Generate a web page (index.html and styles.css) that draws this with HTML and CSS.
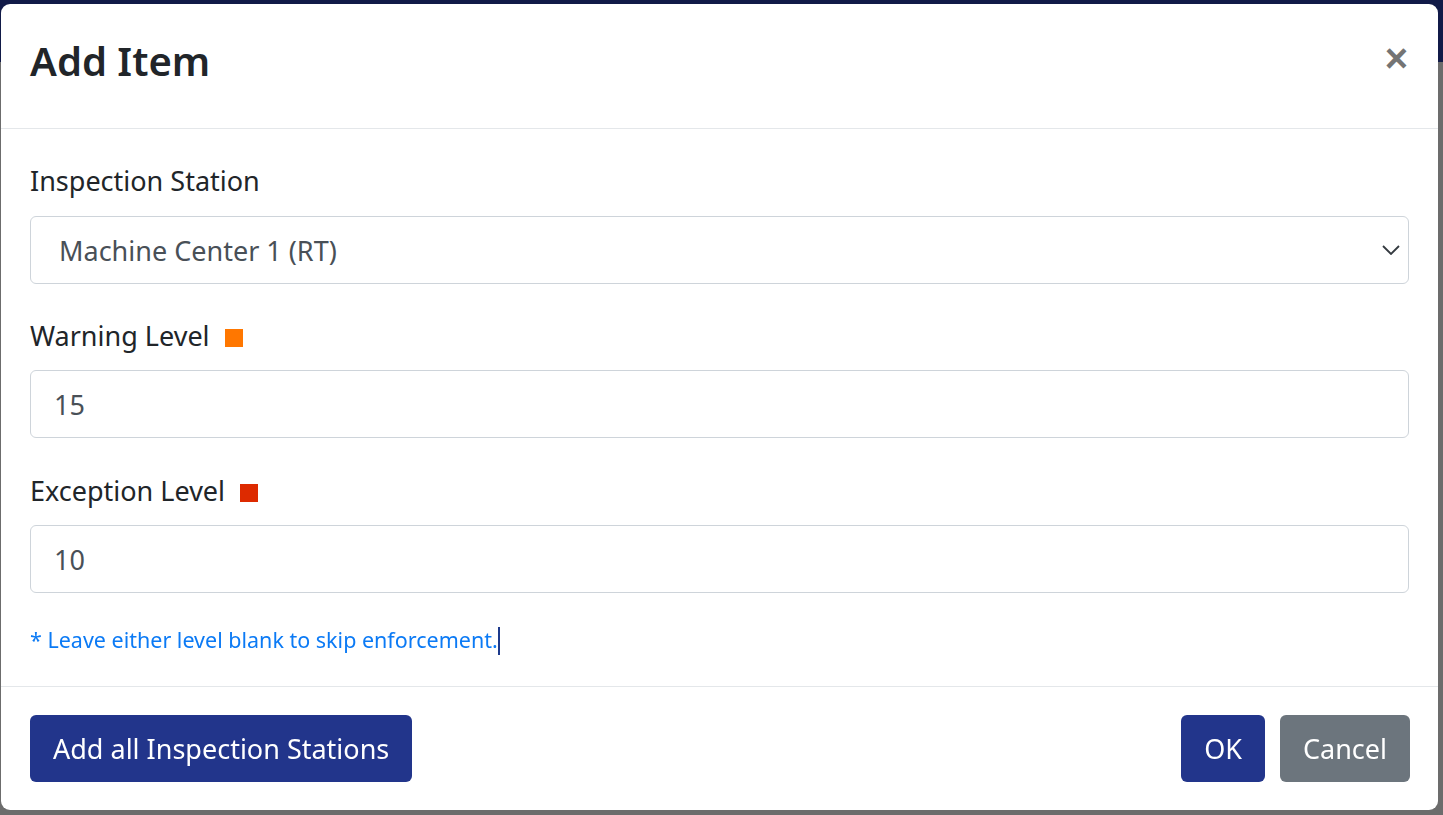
FILE: index.html
```html
<!DOCTYPE html>
<html lang="en">
<head>
  <meta charset="UTF-8" />
  <meta name="viewport" content="width=device-width, initial-scale=1.0" />
  <title>Add Item</title>
  <link rel="stylesheet" href="styles.css">
</head>
<body>
  <div class="page-bar"></div>

  <div class="modal">
    <div class="modal-header">
      <h3 class="modal-title">Add Item</h3>
      <button class="close" type="button">&times;</button>
    </div>

    <div class="modal-body">
      <div class="form-group">
        <label for="station">Inspection Station</label>
        <div class="select-wrap">
          <select id="station" class="form-control">
            <option>Machine Center 1 (RT)</option>
          </select>
          <svg class="chevron" width="18" height="10" viewBox="0 0 18 10">
            <path d="M1 1 L9 9 L17 1" fill="none" stroke="#343a40" stroke-width="1.8" />
          </svg>
        </div>
      </div>

      <div class="form-group">
        <label for="warning">Warning Level <span class="swatch warning"></span></label>
        <input id="warning" class="form-control" type="text" value="15" />
      </div>

      <div class="form-group">
        <label for="exception">Exception Level <span class="swatch exception"></span></label>
        <input id="exception" class="form-control" type="text" value="10" />
      </div>

      <p class="help">* Leave either level blank to skip enforcement.<span class="caret"></span></p>
    </div>

    <div class="modal-footer">
      <button class="btn btn-primary" type="button">Add all Inspection Stations</button>
      <div class="footer-right">
        <button class="btn btn-primary" type="button">OK</button>
        <button class="btn btn-secondary" type="button">Cancel</button>
      </div>
    </div>
  </div>
</body>
</html>
```

FILE: styles.css
```css
html, body {
  margin: 0;
  height: 100%;
}

body {
  background: #6c6c6c;
  font-family: 'Noto Sans', 'Open Sans', sans-serif;
  color: #212529;
  overflow: hidden;
}

.page-bar {
  height: 62px;
  background: #111a48;
}

.modal {
  position: fixed;
  top: 4px;
  left: 1px;
  width: 1437px;
  height: 806px;
  background: #fff;
  border-radius: 9px;
  display: flex;
  flex-direction: column;
  box-sizing: border-box;
}

.modal-header {
  height: 125px;
  box-sizing: border-box;
  border-bottom: 1px solid #e4e7ea;
  display: flex;
  align-items: center;
  justify-content: space-between;
  padding: 0 30px 10px 29px;
}

.modal-title {
  margin: 0;
  font-size: 40px;
  font-weight: 600;
  line-height: 1.2;
  color: #212529;
}

.close {
  border: none;
  background: none;
  padding: 0;
  font-family: 'Liberation Sans', sans-serif;
  font-size: 40px;
  font-weight: 700;
  color: #747474;
  line-height: 1;
  margin-top: -6px;
}

.modal-body {
  flex: 1;
  padding: 34px 29px 0 29px;
}

.form-group {
  margin-bottom: 34px;
}

.form-group:nth-child(2) {
  margin-bottom: 35px;
}

.form-group:nth-child(3) {
  margin-bottom: 31px;
}

label {
  display: block;
  font-size: 27px;
  line-height: 36px;
  margin-bottom: 16px;
}

.form-group:first-child label {
  margin-bottom: 17px;
}

.swatch {
  display: inline-block;
  width: 18px;
  height: 18px;
  margin-left: 8px;
  vertical-align: -1px;
}

.swatch.warning {
  background: #ff7700;
}

.swatch.exception {
  background: #dd2a00;
}

.form-control {
  display: block;
  width: 100%;
  height: 68px;
  box-sizing: border-box;
  border: 1px solid #ced4da;
  border-radius: 6px;
  background: #fff;
  padding: 0 36px 0 28px;
  font-family: inherit;
  font-size: 27px;
  color: #495057;
  outline: none;
}

input.form-control {
  padding-left: 23px;
}

.select-wrap {
  position: relative;
}

select.form-control {
  appearance: none;
  -webkit-appearance: none;
}

.chevron {
  position: absolute;
  right: 9px;
  top: 29px;
  pointer-events: none;
}

.help {
  margin: 0;
  font-size: 21.5px;
  line-height: 31px;
  color: #0b7af5;
}

.caret {
  display: inline-block;
  width: 2px;
  height: 28px;
  background: #1d3a8c;
  vertical-align: -7px;
}

.modal-footer {
  height: 124px;
  box-sizing: border-box;
  border-top: 1px solid #e4e7ea;
  display: flex;
  align-items: center;
  justify-content: space-between;
  padding: 0 28px 0 29px;
}

.footer-right {
  display: flex;
  gap: 15px;
}

.btn {
  height: 67px;
  border: none;
  border-radius: 6px;
  padding: 0 23px;
  font-family: inherit;
  font-size: 27px;
  color: #fff;
}

.btn-primary {
  background: #22358b;
}

.btn-secondary {
  background: #6c757d;
}
```
